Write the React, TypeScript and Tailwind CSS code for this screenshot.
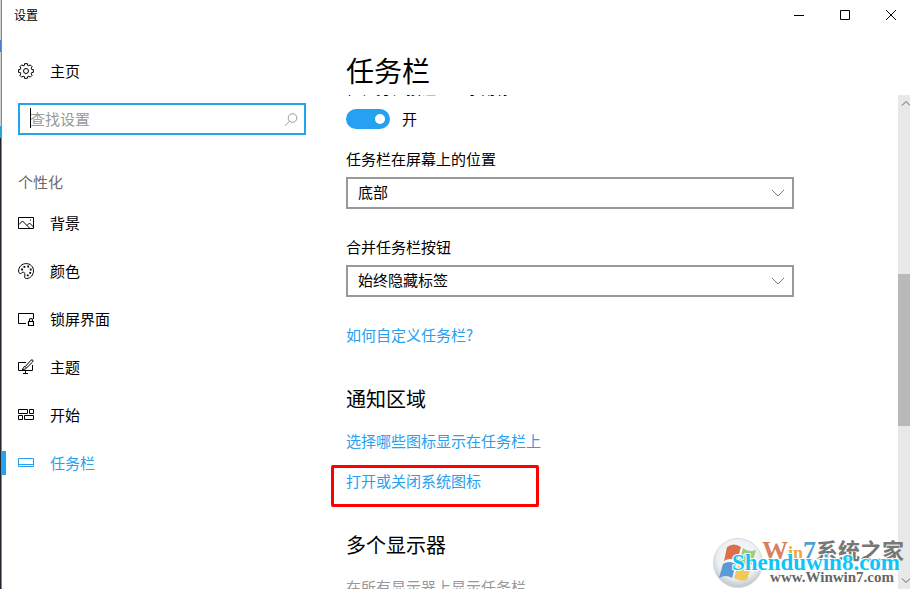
import type { ReactNode } from 'react'

interface NavItem {
  label: string
  icon: ReactNode
  active?: boolean
}

function Icon({ children }: { children: ReactNode }) {
  return (
    <svg className="size-4 shrink-0" viewBox="0 0 16 16" fill="none" stroke="currentColor" aria-hidden="true">
      {children}
    </svg>
  )
}

// eight-toothed cog
const gearPath = Array.from({ length: 8 }, (_, i) => {
  const point = (deg: number, r: number) => {
    const a = ((deg + i * 45) * Math.PI) / 180
    return `${(8 + r * Math.cos(a)).toFixed(2)} ${(8 + r * Math.sin(a)).toFixed(2)}`
  }
  return `${i ? 'L' : 'M'}${point(-11, 7.5)}L${point(11, 7.5)}L${point(15, 5.9)}L${point(30, 5.9)}`
}).join('') + 'Z'

const navItems: NavItem[] = [
  {
    label: '背景',
    icon: (
      <Icon>
        <path d="M.5 2.5h15v11H.5z" />
        <path d="M1 9.5 4.5 6l7 7M9 10.5 11.5 8l4 4" />
        <path d="M12 5h1" />
      </Icon>
    ),
  },
  {
    label: '颜色',
    icon: (
      <Icon>
        <path d="M.6 8C.6 3.800 4 .6 8.200.6s7.300 3.200 7.300 7.200-3 7.700-6.800 7.700c-2 0-2.300-1-2-2.300.4-1.800.3-3.900-1.400-4-1.200-.1-1.700 1.300-2.900 1.300C1.200 10.500.6 9.400.6 8Z" />
        <path
          d="M3.200 6.500h1.800M5.500 3.800h1.800M9.300 3.500h1.800M11.800 6.500h1.800M11.300 9.800h1.800M8.800 12.300h1.800"
          strokeWidth="1.8"
        />
      </Icon>
    ),
  },
  {
    label: '锁屏界面',
    icon: (
      <Icon>
        <path d="M8 12.500H.5v-10h15V8" />
        <path d="M10.500 10.500h5v4h-5zM11.500 10.500V9q0-1.500 1.500-1.500T14.500 9v1.500" strokeWidth="1.200" />
      </Icon>
    ),
  },
  {
    label: '主题',
    icon: (
      <Icon>
        <path d="M8 3.500H.5v8h14V6M7.500 12v2M5 14.500h5" />
        <path d="M7.200 7.600 13 1.200q1.200-.9 1.800 0t-.3 1.900L8.500 9M7.200 7.600 8.500 9Q8 10.500 4 10.500 5.500 9.500 5.500 8.500T7.200 7.600Z" />
      </Icon>
    ),
  },
  {
    label: '开始',
    icon: (
      <Icon>
        <path d="M.5 2.500h9v4h-9zM11.500 2.500h4v4h-4zM.5 8.500h4v4h-4zM6.500 8.500h9v4h-9z" />
      </Icon>
    ),
  },
  {
    label: '任务栏',
    active: true,
    icon: (
      <Icon>
        <path d="M.5 3.500h15v8H.5zM.5 9.500h15" />
      </Icon>
    ),
  },
]

function TitleBar() {
  return (
    <header className="flex h-[30px] shrink-0 items-center overflow-hidden pl-3">
      <span className="flex-1 text-xs">设置</span>
      <div className="-mr-1 flex">
        <button aria-label="最小化" className="flex h-[30px] w-[46px] items-center justify-center">
          <svg width="10" height="10" stroke="currentColor"><path d="M0 5.500h10" /></svg>
        </button>
        <button aria-label="最大化" className="flex h-[30px] w-[46px] items-center justify-center">
          <svg width="10" height="10" fill="none" stroke="currentColor"><path d="M.5.5h9v9h-9z" /></svg>
        </button>
        <button aria-label="关闭" className="flex h-[30px] w-[46px] items-center justify-center">
          <svg width="10" height="10" stroke="currentColor"><path d="m0 0 10 10M10 0 0 10" /></svg>
        </button>
      </div>
    </header>
  )
}

function Sidebar() {
  return (
    <aside className="w-[328px] shrink-0 pt-[17px]">
      <a href="#home" className="flex h-12 items-center gap-4 pl-4">
        <Icon>
          <path d={gearPath} />
          <circle cx="8" cy="8" r="2.500" />
        </Icon>
        主页
      </a>
      <div className="relative mt-2 mr-6 ml-4">
        <input
          type="text"
          aria-label="查找设置"
          placeholder="查找设置"
          className="block h-8 w-full border-2 border-[#26a0f1] bg-white pr-8 pb-0.5 pl-2.5 outline-none placeholder:text-[#999]"
        />
        <span className="absolute top-[5px] left-3 h-5 w-px bg-black" />
        <svg className="absolute top-2.5 right-2 size-3.5" viewBox="0 0 14 14" fill="none" stroke="#999">
          <circle cx="8.500" cy="5" r="4.300" />
          <path d="M5.500 8.200.8 12.900" />
        </svg>
      </div>
      <h2 className="pt-[35px] pb-[5px] pl-4 leading-6 text-[#6b6b6b]">个性化</h2>
      <nav>
        {navItems.map(item => (
          <a
            key={item.label}
            href="#"
            aria-current={item.active ? 'page' : undefined}
            className={item.active ? 'flex h-12 items-center text-[#26a0f1]' : 'flex h-12 items-center'}
          >
            <span className={item.active ? 'mr-3 h-6 w-1 bg-[#26a0f1]' : 'mr-3 h-6 w-1'} />
            {item.icon}
            <span className="ml-4">{item.label}</span>
          </a>
        ))}
      </nav>
    </aside>
  )
}

function SelectField({ id, label, value }: { id: string; label: string; value: string }) {
  return (
    <div className="max-w-[448px]">
      <label htmlFor={id} className="block">{label}</label>
      <div className="relative mt-2">
        <select id={id} className="block h-8 w-full appearance-none border-2 border-[#999] bg-white pr-8 pb-0.5 pl-2.5">
          <option>{value}</option>
        </select>
        <svg className="pointer-events-none absolute top-3 right-2.5" width="12" height="8" fill="none" stroke="#777">
          <path d="m0 1 6 6 6-6" />
        </svg>
      </div>
    </div>
  )
}

function Scrollbar() {
  return (
    <div className="flex w-3 shrink-0 flex-col overflow-hidden bg-[#e8e8e8]">
      <svg className="h-[17px] w-[17px] shrink-0" fill="none" stroke="#606060">
        <path d="m4 10.500 4-4 4 4" />
      </svg>
      <div className="flex-[162]" />
      <div className="flex-[152] bg-[#b9b9b9]" />
      <div className="flex-[146]" />
      <svg className="h-[17px] w-[17px] shrink-0" fill="none" stroke="#606060">
        <path d="m4 6.500 4 4 4-4" />
      </svg>
    </div>
  )
}

function Watermark() {
  return (
    <div className="absolute right-1.5 bottom-0 flex font-['Liberation_Serif','Noto_Sans_CJK_SC',serif] font-bold">
      <svg className="size-[52px]" viewBox="0 0 52 52">
        <defs>
          <radialGradient id="orb" cx="50%" cy="40%" r="60%">
            <stop offset="0" stopColor="#fff" />
            <stop offset=".7" stopColor="#eceff2" />
            <stop offset="1" stopColor="#bcc3ca" />
          </radialGradient>
        </defs>
        <circle cx="26" cy="26" r="24.500" fill="url(#orb)" stroke="#d5dade" />
        <path d="M15 10q7-5 14 0l-4 14q-7-4-13 0Z" fill="#dc704b" />
        <path d="M31 11q6 5 13 2l-4 14q-7 2-13-2Z" fill="#a3c97c" />
        <path d="M11 27q6-4 13 0l-4 14q-6-4-13 0Z" fill="#5b9ad5" />
        <path d="M26 28q6 4 13 2l-4 13q-6 2-13-2Z" fill="#f0c95c" />
      </svg>
      <div className="relative -ml-1 h-[52px] w-[144px] text-[#666]">
        <div className="flex items-baseline justify-end text-[22px] leading-7 whitespace-nowrap text-[#777]">
          <span className="text-[26px] text-[#d8805f]">W</span>
          <span className="text-lg text-[#eba640]">in</span>
          <span className="text-[26px] text-[#4da0d0]">7</span>
          <span>系统之家</span>
        </div>
        <div className="absolute right-2.5 bottom-1 text-[15px] leading-4">www.Winwin7.com</div>
        <div className="absolute right-1 bottom-3 text-[23px] leading-7 text-[#10c4f5] [paint-order:stroke_fill] [-webkit-text-stroke:2px_white]">
          Shenduwin8.com
        </div>
      </div>
    </div>
  )
}

export default function App() {
  return (
    <div className="relative flex h-screen overflow-hidden bg-white font-['Noto_Sans_CJK_SC',sans-serif] text-[15px] leading-5 text-black">
      {/* sliver of the desktop behind the window */}
      <div className="flex w-px shrink-0 flex-col bg-[#20242c]">
        <div className="h-10 bg-[#d0d0d0]" />
        <div className="h-3 bg-[#4a7fd0]" />
        <div className="h-[74px] bg-[#d0d0d0]" />
        <div className="h-3 bg-[#26a0d8]" />
      </div>
      <div className="flex min-w-0 flex-1 flex-col border-l border-[#3b9fd8]">
        <TitleBar />
        <div className="flex min-h-0 flex-1">
          <Sidebar />
          <main className="flex min-w-0 flex-1 flex-col">
            <h1 className="pt-[22px] pb-[7px] pl-4 text-[28px] leading-9">任务栏</h1>
            <div className="flex min-h-0 flex-1">
              <div className="min-w-0 flex-1 overflow-hidden pl-4">
                {/* scrolled almost out of view */}
                <div className="flex h-0.5 items-end overflow-hidden">
                  <span className="leading-[18px]">在任务栏按钮上显示角标</span>
                </div>
                <label className="mt-3 flex items-center gap-3">
                  <input
                    type="checkbox"
                    role="switch"
                    defaultChecked
                    className="flex h-5 w-11 appearance-none items-center justify-end rounded-full bg-[#26a0f1] pr-[5px] after:size-2.5 after:rounded-full after:bg-white"
                  />
                  开
                </label>
                <div className="mt-5 flex flex-col gap-7">
                  <SelectField id="position" label="任务栏在屏幕上的位置" value="底部" />
                  <SelectField id="combine" label="合并任务栏按钮" value="始终隐藏标签" />
                </div>
                <a href="#help" className="mt-7 block w-fit text-[#26a0f1]">如何自定义任务栏?</a>
                <h2 className="mt-10 text-xl leading-7">通知区域</h2>
                <a href="#icons" className="mt-[18px] block w-fit text-[#26a0f1]">选择哪些图标显示在任务栏上</a>
                <div className="relative mt-5">
                  <a href="#system-icons" className="block w-fit text-[#26a0f1]">打开或关闭系统图标</a>
                  <span className="pointer-events-none absolute -top-1.5 -left-[15px] h-[42px] w-52 rounded-xs border-3 border-[#fe0000]" />
                </div>
                <h2 className="mt-10 text-xl leading-7">多个显示器</h2>
                <p className="mt-[18px] text-[#999]">在所有显示器上显示任务栏</p>
              </div>
              <Scrollbar />
            </div>
          </main>
        </div>
      </div>
      <Watermark />
    </div>
  )
}
